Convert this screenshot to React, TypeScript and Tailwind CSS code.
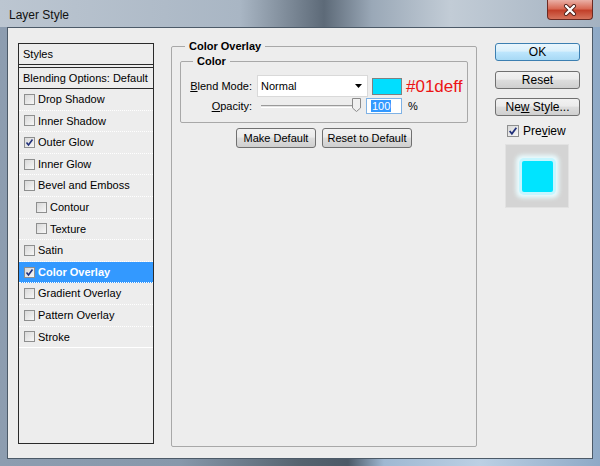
import React from "react";

const items = [
  { label: "Drop Shadow" },
  { label: "Inner Shadow" },
  { label: "Outer Glow", checked: true },
  { label: "Inner Glow" },
  { label: "Bevel and Emboss" },
  { label: "Contour", indent: true },
  { label: "Texture", indent: true },
  { label: "Satin" },
  { label: "Color Overlay", checked: true, selected: true },
  { label: "Gradient Overlay" },
  { label: "Pattern Overlay" },
  { label: "Stroke" },
];

const Check = ({ checked, size = 11 }: { checked?: boolean; size?: number }) => (
  <span
    className="shrink-0 inline-flex items-center justify-center border border-[#8e8f8f] bg-[linear-gradient(135deg,#d8d8d8,#f7f7f7)]"
    style={{ width: size, height: size }}
  >
    {checked && (
      <svg width={size - 2} height={size - 2} viewBox="0 0 9 9">
        <path d="M1.5 4.5 L3.5 7 L7.5 1.5" fill="none" stroke="#21307a" strokeWidth="1.6" />
      </svg>
    )}
  </span>
);

const Btn = ({ children, w, primary }: { children: React.ReactNode; w: string; primary?: boolean }) => (
  <div
    className={`${w} flex items-center justify-center rounded-[3px] border ${
      primary
        ? "border-[#3c7fb1] bg-[linear-gradient(#eaf6fd,#d9f0fc_45%,#bee6fd_50%,#a7d9f5)]"
        : "border-[#707070] bg-[linear-gradient(#f2f2f2,#ebebeb_45%,#dddddd_50%,#cfcfcf)]"
    }`}
  >
    {children}
  </div>
);

export default function App() {
  return (
    <div className="w-[600px] h-[466px] flex flex-col overflow-hidden font-['Liberation_Sans',Arial,sans-serif] text-black bg-[linear-gradient(90deg,#8d9db0_0%,#8798ab_30%,#56636f_50%,#4c5967_58%,#9fb8d2_64%,#bcd0e4_80%,#8ea9c6_100%)]">
      {/* title bar */}
      <div className="h-[27px] flex justify-between bg-[linear-gradient(90deg,#bcc6d1_0%,#a9b6c4_40%,#5d6a78_54%,#9aa8b7_62%,#c2ccd6_75%,#a4b2c1_100%)]">
        <span className="self-center pl-[9px] pt-[2px] text-[12px] text-[#111]">Layer Style</span>
        <div className="mr-[7px] w-[46px] h-[20px] rounded-b-[4px] border border-t-0 border-[#6b2a22] bg-[linear-gradient(#eab0a6,#d86a55_45%,#c2402a_55%,#d5735c)] flex items-center justify-center">
          <svg width="14" height="12" viewBox="0 0 14 12">
            <path d="M3 2 L11 10 M11 2 L3 10" stroke="#4a1c16" strokeWidth="4" strokeLinecap="round" />
            <path d="M3 2 L11 10 M11 2 L3 10" stroke="#fff" strokeWidth="2.4" strokeLinecap="round" />
          </svg>
        </div>
      </div>

      {/* client */}
      <div className="mx-[7px] mb-[7px] flex-1 border border-[#4c5a68] bg-[#ededed] flex pl-[10px] pt-[11px]">
        {/* styles list */}
        <div className="mt-[4px] w-[136px] h-[401px] border border-[#2a2a2a] text-[11px] flex flex-col">
          <div className="h-[21px] shrink-0 flex items-center pl-[4px] border-b border-[#2a2a2a]">Styles</div>
          <div className="h-[2px] shrink-0" />
          <div className="h-[22px] shrink-0 flex items-center pl-[4px] border-y border-[#2a2a2a]">
            Blending Options: Default
          </div>
          {items.map((it, i) => (
            <div
              key={it.label}
              className={`h-[21.6px] shrink-0 flex items-center gap-[3px] border-b ${
                i === items.length - 1 ? "border-solid border-white" : "border-dotted border-white"
              } ${it.indent ? "pl-[17px]" : "pl-[5px]"} ${
                it.selected ? "bg-[#3399ff] text-white font-bold" : ""
              }`}
            >
              <Check checked={it.checked} />
              <span>{it.label}</span>
            </div>
          ))}
        </div>

        {/* color overlay group */}
        <fieldset className="ml-[17px] w-[306px] min-w-0 h-[408px] border border-[#a8a8a8] rounded-[2px] px-[8px] text-[11px]">
          <legend className="ml-[5px] px-[4px] font-bold leading-[14px]">Color Overlay</legend>
          <fieldset className="mt-[1px] w-[288px] min-w-0 border border-[#a8a8a8] rounded-[2px] px-[8px] pb-[8px]">
            <legend className="ml-[4px] px-[4px] font-bold leading-[14px]">Color</legend>
            <div className="mt-[7px] h-[22px] flex items-center">
              <span className="w-[63px] shrink-0 text-right">
                <span className="underline">B</span>lend Mode:
              </span>
              <div className="ml-[5px] w-[111px] shrink-0 h-[22px] bg-white border border-[#d9d9d9] flex items-center pl-[3px] pr-[5px] justify-between">
                <span>Normal</span>
                <svg width="7" height="4" viewBox="0 0 7 4">
                  <path d="M0 0 H7 L3.5 4 Z" fill="#000" />
                </svg>
              </div>
              <div className="ml-[4px] w-[30px] shrink-0 h-[17px] border border-[#808080] bg-[#01deff]" />
              <span className="ml-[4px] text-[17px] leading-none text-[#ec1414] whitespace-nowrap">#01deff</span>
            </div>
            <div className="mt-[1px] h-[16px] flex items-center">
              <span className="w-[63px] shrink-0 text-right">
                <span className="underline">O</span>pacity:
              </span>
              <div className="ml-[9px] w-[100px] shrink-0 h-[14px] relative flex items-center">
                <div className="w-full h-[3px] border-t border-[#9a9a9a] border-b border-b-white bg-[#e3e3e3]" />
                <svg className="absolute left-[91px] top-[-1px]" width="9" height="14" viewBox="0 0 9 14">
                  <path d="M0.5 0.5 H8.5 V10 L4.5 13.5 L0.5 10 Z" fill="#f0f0f0" stroke="#8a8a8a" />
                </svg>
              </div>
              <div className="ml-[5px] w-[36px] shrink-0 h-[16px] bg-white border border-[#7fb2e5] flex items-center pl-[4px]">
                <span className="bg-[#3399ff] text-white leading-[12px] px-[1px]">100</span>
              </div>
              <span className="ml-[6px]">%</span>
            </div>
          </fieldset>
          <div className="mt-[5px] flex justify-center gap-[6px]">
            <Btn w="w-[80px] h-[20px]">Make Default</Btn>
            <Btn w="w-[90px] h-[20px]">Reset to Default</Btn>
          </div>
        </fieldset>

        {/* right buttons */}
        <div className="ml-[18px] mt-[4px] w-[85px] flex flex-col text-[12px]">
          <Btn w="h-[18px]" primary>
            OK
          </Btn>
          <div className="mt-[10px]">
            <Btn w="h-[18px]">Reset</Btn>
          </div>
          <div className="mt-[9px]">
            <Btn w="h-[18px]">
              <span>
                Ne<span className="underline">w</span> Style...
              </span>
            </Btn>
          </div>
          <div className="mt-[6px] flex items-center gap-[4px] pl-[12px]">
            <Check checked size={12} />
            <span>
              Pre<span className="underline">v</span>iew
            </span>
          </div>
          <div className="mt-[4px] ml-[10px] w-[64px] h-[64px] bg-[#d4d4d4] border border-[#e2e2e2] flex items-center justify-center">
            <div className="w-[31px] h-[31px] rounded-[2px] bg-[#00e4ff] shadow-[0_0_0_3px_#c6f6ff,0_0_4px_6px_#e9fcff]" />
          </div>
        </div>
      </div>
    </div>
  );
}
